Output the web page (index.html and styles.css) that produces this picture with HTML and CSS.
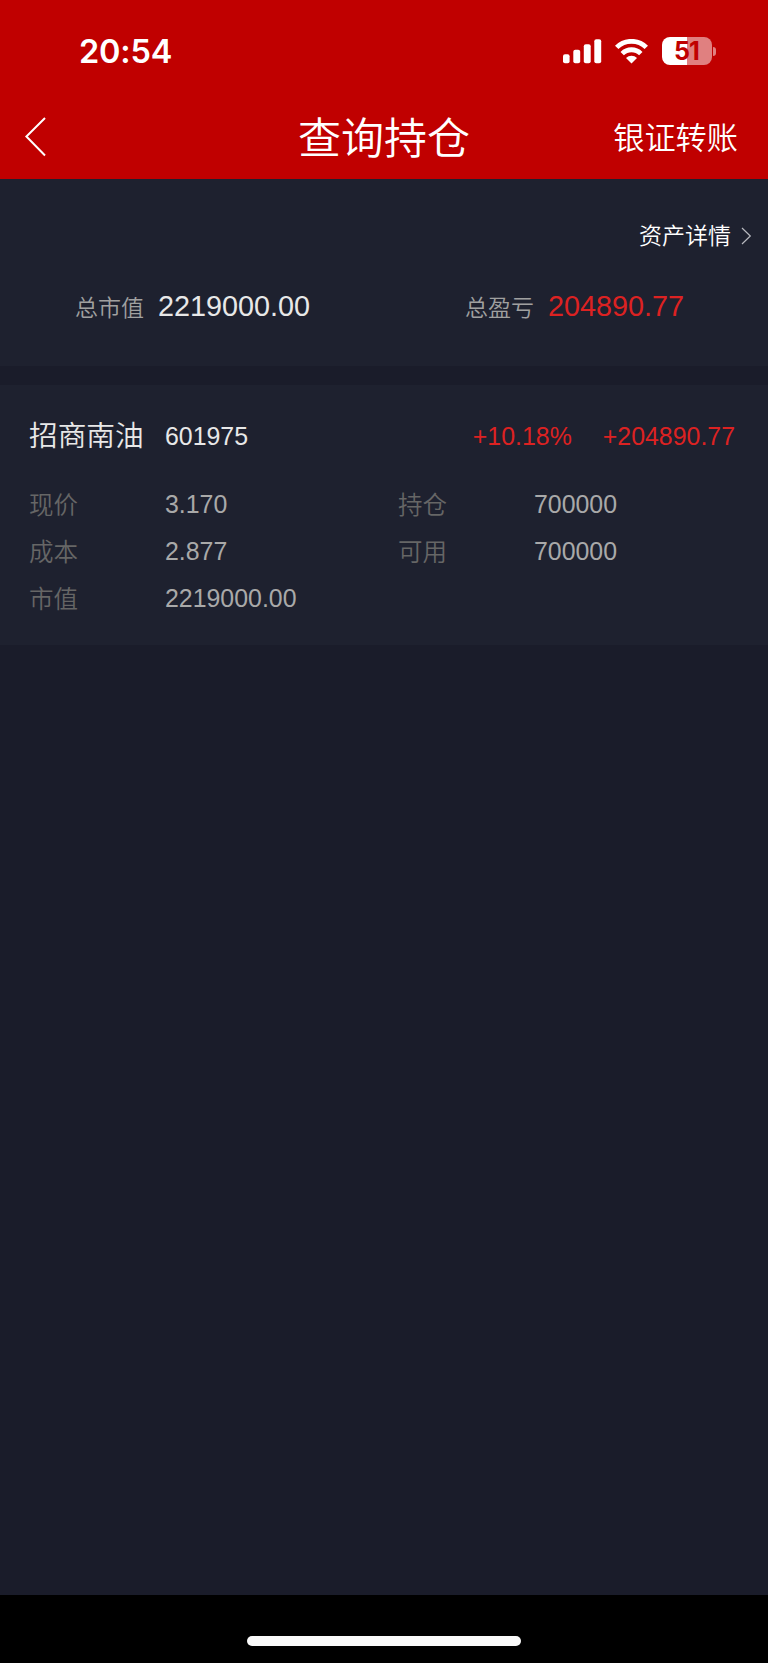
FILE: index.html
```
<!DOCTYPE html>
<html lang="zh-CN">
<head>
    <meta charset="UTF-8">
    <meta name="viewport" content="width=device-width, initial-scale=1.0">
    <title>查询持仓</title>
    <link rel="stylesheet" href="styles.css">
</head>
<body>
    <header class="header">
        <div class="status-bar">
            <span class="time">20:54</span>
            <div class="status-icons">
                <svg class="signal" width="39" height="25" viewBox="0 0 39 25" fill="#fff">
                    <rect x="0" y="15.3" width="6.6" height="9" rx="2"/>
                    <rect x="10.3" y="10.7" width="6.9" height="13.6" rx="2"/>
                    <rect x="20.8" y="5.3" width="6.9" height="19" rx="2"/>
                    <rect x="31.3" y="0.3" width="6.9" height="24" rx="2"/>
                </svg>
                <svg class="wifi" width="33" height="25" viewBox="0 0 33 25">
                    <path d="M1.7 8.4 A21 21 0 0 1 31.3 8.4" fill="none" stroke="#fff" stroke-width="4.8"/>
                    <path d="M7.2 14.6 A13.2 13.2 0 0 1 25.8 14.6" fill="none" stroke="#fff" stroke-width="4.8"/>
                    <path d="M16.5 24.6 L11 19 A8 8 0 0 1 22 19 Z" fill="#fff"/>
                </svg>
                <div class="battery">
                    <div class="battery-body">51</div>
                    <div class="battery-tip"></div>
                </div>
            </div>
        </div>
        <nav class="nav">
            <svg class="back" width="23" height="42" viewBox="0 0 23 42">
                <path d="M21 2 L2.4 20.5 L21 39.5" fill="none" stroke="#fff" stroke-width="2"/>
            </svg>
            <h1 class="title">查询持仓</h1>
            <span class="transfer">银证转账</span>
        </nav>
    </header>

    <!-- 资产汇总 -->
    <section class="summary">
        <div class="detail-link">
            <span class="detail-text">资产详情</span>
            <svg width="11" height="18" viewBox="0 0 11 18">
                <path d="M1 1 L9.3 9 L1 17" fill="none" stroke="#b8b9bf" stroke-width="1.2"/>
            </svg>
        </div>
        <div class="totals">
            <div class="total">
                <span class="total-label">总市值</span>
                <span class="total-value">2219000.00</span>
            </div>
            <div class="total">
                <span class="total-label">总盈亏</span>
                <span class="total-value red">204890.77</span>
            </div>
        </div>
    </section>

    <!-- 持仓列表 -->
    <section class="stock">
        <div class="stock-head">
            <span class="stock-name">招商南油</span>
            <span class="stock-code">601975</span>
            <span class="stock-rate red">+10.18%</span>
            <span class="red">+204890.77</span>
        </div>
        <div class="stock-info">
            <span class="label">现价</span><span>3.170</span>
            <span class="label">持仓</span><span>700000</span>
            <span class="label">成本</span><span>2.877</span>
            <span class="label">可用</span><span>700000</span>
            <span class="label">市值</span><span>2219000.00</span>
        </div>
    </section>

    <footer class="home-bar">
        <div class="home-indicator"></div>
    </footer>
</body>
</html>
```
FILE: styles.css
```
* {
    margin: 0;
    padding: 0;
    box-sizing: border-box;
}

body {
    height: 1663px;
    display: flex;
    flex-direction: column;
    background-color: #1a1c2a;
    color: #e8e8e8;
    font-family: "Liberation Sans", "Noto Sans CJK SC", sans-serif;
    font-weight: 350;
    white-space: nowrap;
}

.red {
    color: #dc2222;
}

.header {
    height: 179px;
    background-color: #c00000;
    color: #fff;
}

.status-bar {
    height: 102px;
    padding: 0 52px 0 79px;
    display: flex;
    align-items: center;
    justify-content: space-between;
}

.time {
    font-family: Inter, sans-serif;
    font-size: 32.5px;
    font-weight: 600;
    letter-spacing: -0.2px;
}

.status-icons {
    display: flex;
    align-items: center;
}

.wifi {
    margin: 0 14px 0 13px;
}

.battery {
    display: flex;
    align-items: center;
    gap: 1px;
}

.battery-body {
    width: 50px;
    height: 28px;
    padding-right: 1px;
    border-radius: 8px;
    background: linear-gradient(to right, #fff 51%, #e08080 51%);
    color: #c00000;
    font-family: Inter, sans-serif;
    font-size: 25px;
    font-weight: 700;
    letter-spacing: -0.8px;
    line-height: 28px;
    text-align: center;
}

.battery-tip {
    width: 3px;
    height: 9px;
    border-radius: 0 4px 4px 0;
    background-color: #e08080;
}

.nav {
    height: 70px;
    padding: 0 30px 0 24px;
    display: grid;
    grid-template-columns: 1fr auto 1fr;
    align-items: center;
}

.back {
    margin-bottom: 2px;
}

.title {
    margin-left: 6px;
    padding-top: 2px;
    font-size: 43px;
    font-weight: 350;
    line-height: 70px;
}

.transfer {
    justify-self: end;
    padding-bottom: 6px;
    font-size: 31.2px;
}

.summary {
    height: 187px;
    padding-top: 36px;
    background-color: #1e212f;
}

.detail-link {
    height: 40px;
    padding-right: 16px;
    display: flex;
    align-items: center;
    justify-content: flex-end;
    gap: 10px;
    color: #fff;
    font-size: 23px;
}

.detail-text {
    padding-bottom: 3px;
}

.detail-link svg {
    margin-top: 2px;
}

.totals {
    height: 60px;
    margin-top: 21px;
    padding: 0 84px 0 75px;
    display: flex;
    align-items: center;
    justify-content: space-between;
}

.total {
    display: flex;
    align-items: baseline;
    gap: 14px;
}

.total-label {
    color: #a0a0a0;
    font-size: 23px;
}

.total-value {
    font-size: 28.8px;
}

.stock {
    height: 260px;
    margin-top: 19px;
    padding: 26px 33px 0 29px;
    background-color: #1e212f;
    font-size: 24.9px;
}

.stock-head {
    height: 50px;
    display: flex;
    align-items: center;
}

.stock-name {
    width: 136px;
    padding-bottom: 5px;
    font-size: 28.7px;
}

.stock-rate {
    margin-left: auto;
    margin-right: 31px;
}

.stock-info {
    margin-top: 20px;
    display: grid;
    grid-template-columns: 136px 233px 136px 1fr;
    grid-auto-rows: 47px;
    align-items: center;
    color: #a9a9a9;
}

.label {
    padding-bottom: 3px;
    color: #666;
    font-size: 24.5px;
}

.home-bar {
    height: 68px;
    margin-top: auto;
    padding-top: 41px;
    background-color: #000;
}

.home-indicator {
    width: 274px;
    height: 10px;
    margin: 0 auto;
    border-radius: 5px;
    background-color: #fafafa;
}
```
